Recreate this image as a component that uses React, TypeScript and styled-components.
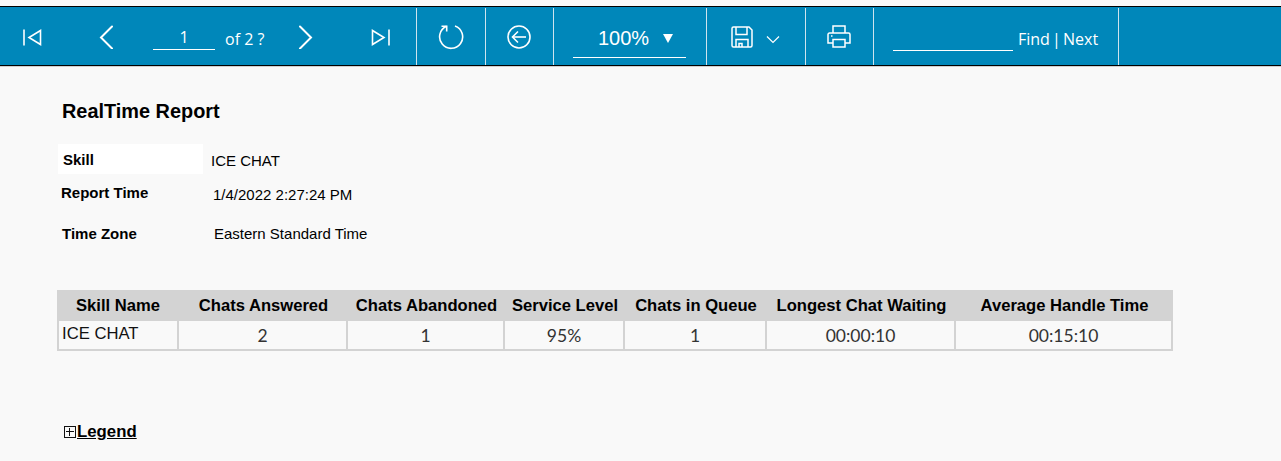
import styled, { createGlobalStyle } from 'styled-components';

const columns = [
  { title: 'Skill Name', width: 122, value: 'ICE CHAT' },
  { title: 'Chats Answered', width: 169, value: '2' },
  { title: 'Chats Abandoned', width: 157, value: '1' },
  { title: 'Service Level', width: 120, value: '95%' },
  { title: 'Chats in Queue', width: 142, value: '1' },
  { title: 'Longest Chat Waiting', width: 189, value: '00:00:10' },
  { title: 'Average Handle Time', width: 217, value: '00:15:10' },
];

function App() {
  return (
    <Page>
      <GlobalStyle />
      <Toolbar>
        <Section $width={417}>
          <IconSlot $left={22} $width={21} $drop={2}>
            <svg width="21" height="20" viewBox="0 0 21 20" fill="none" stroke="#fff" strokeWidth="1.6">
              <path d="M2 1.5v16" />
              <path d="M18.5 2.5v14L7 9.5z" />
            </svg>
          </IconSlot>
          <IconSlot $left={55} $width={18}>
            <svg width="18" height="24" viewBox="0 0 18 24" fill="none" stroke="#fff" strokeWidth="2" strokeLinecap="round">
              <path d="M14 1.5 3 12.5l11 11" />
            </svg>
          </IconSlot>
          <PageInput>1</PageInput>
          <PageCount>of 2 ?</PageCount>
          <IconSlot $left={31} $width={18}>
            <svg width="18" height="24" viewBox="0 0 18 24" fill="none" stroke="#fff" strokeWidth="2" strokeLinecap="round">
              <path d="M3 1.5l11 11-11 11" />
            </svg>
          </IconSlot>
          <IconSlot $left={55} $width={21} $drop={2}>
            <svg width="21" height="20" viewBox="0 0 21 20" fill="none" stroke="#fff" strokeWidth="1.6">
              <path d="M2.5 2.5v14L14 9.5z" />
              <path d="M19 1.500v16" />
            </svg>
          </IconSlot>
        </Section>
        <Section $width={69} $center>
          <svg width="26" height="26" viewBox="0 0 26 26" fill="none" stroke="#fff" strokeWidth="1.6">
            <path d="M8.5 2.3A11.5 11.5 0 1 0 17 2" />
            <path d="M3.5 2.2 8.7 2.2 8.7 7.4" />
          </svg>
        </Section>
        <Section $width={68}>
          <IconSlot $left={20} $width={26}>
            <svg width="26" height="26" viewBox="0 0 26 26" fill="none" stroke="#fff" strokeWidth="1.6">
              <circle cx="13" cy="13" r="11" />
              <path d="M20 13H7" />
              <path d="M12 7.5 6.5 13l5.5 5.5" />
            </svg>
          </IconSlot>
        </Section>
        <Section $width={153}>
          <ZoomSelect>
            100%
            <ZoomCaret />
          </ZoomSelect>
        </Section>
        <Section $width={99}>
          <IconSlot $left={24} $width={22}>
            <svg width="22" height="22" viewBox="0 0 22 22" fill="none" stroke="#fff" strokeWidth="1.5">
              <path d="M1 2.5A1.5 1.5 0 0 1 2.5 1H18l3 3v15.5a1.5 1.5 0 0 1-1.500 1.500h-17A1.500 1.500 0 0 1 1 19.500z" />
              <path d="M5 1v7.500h11V1" />
              <path d="M5 21v-7.500h12V21" />
              <path d="M8 21v-3.500h3V21" />
            </svg>
          </IconSlot>
          <IconSlot $left={13} $width={14} $drop={6}>
            <svg width="14" height="9" viewBox="0 0 14 9" fill="none" stroke="#fff" strokeWidth="1.200">
              <path d="M1 1.500l6 6 6-6" />
            </svg>
          </IconSlot>
        </Section>
        <Section $width={68}>
          <IconSlot $left={21} $width={24}>
            <svg width="24" height="24" viewBox="0 0 24 24" fill="none" stroke="#fff" strokeWidth="1.500">
              <path d="M6 8V1h12v7" />
              <path d="M6 18H1V9.500A1.500 1.500 0 0 1 2.500 8h19A1.500 1.500 0 0 1 23 9.500V18h-5" />
              <path d="M6 14.500h12V22H6z" />
              <path d="M4 11h1.500" />
            </svg>
          </IconSlot>
        </Section>
        <Section $width={245}>
          <FindInput />
          <FindLinks>Find | Next</FindLinks>
        </Section>
      </Toolbar>

      <Content>
        <Title>RealTime Report</Title>
        <SkillRow>
          <SkillLabel>Skill</SkillLabel>
          <InfoValue>ICE CHAT</InfoValue>
        </SkillRow>
        <InfoRow $top={3} $left={3}>
          <InfoLabel>Report Time</InfoLabel>
          <InfoValue $drop={4}>1/4/2022 2:27:24 PM</InfoValue>
        </InfoRow>
        <InfoRow $top={11} $left={4}>
          <InfoLabel>Time Zone</InfoLabel>
          <InfoValue $drop={0}>Eastern Standard Time</InfoValue>
        </InfoRow>

        <ReportTable>
          <colgroup>
            {columns.map((col) => (
              <col key={col.title} style={{ width: col.width }} />
            ))}
          </colgroup>
          <thead>
            <tr>
              {columns.map((col) => (
                <HeadCell key={col.title}>{col.title}</HeadCell>
              ))}
            </tr>
          </thead>
          <tbody>
            <tr>
              {columns.map((col, i) =>
                i === 0 ? (
                  <NameCell key={col.title}>{col.value}</NameCell>
                ) : (
                  <ValueCell key={col.title}>{col.value}</ValueCell>
                ),
              )}
            </tr>
          </tbody>
        </ReportTable>

        <Legend>
          <LegendBox />
          <LegendLink>Legend</LegendLink>
        </Legend>
      </Content>
    </Page>
  );
}

const GlobalStyle = createGlobalStyle`
  html, body {
    margin: 0;
    padding: 0;
    background: #f9f9f9;
  }
`;

const Page = styled.div`
  width: 1281px;
  height: 461px;
  overflow: hidden;
  padding-top: 6px;
  box-sizing: border-box;
  background: #f9f9f9;
  font-family: 'Liberation Sans', Arial, sans-serif;
  color: #000;
`;

const Toolbar = styled.div`
  display: flex;
  height: 58px;
  background: #0087ba;
  border-top: 1px solid #000;
  border-bottom: 1px solid #000;
  box-shadow: 0 1px 0 #cfcfcf;
`;

const Section = styled.div<{ $width: number; $center?: boolean }>`
  width: ${({ $width }) => $width}px;
  flex: none;
  box-sizing: border-box;
  display: flex;
  align-items: center;
  justify-content: ${({ $center }) => ($center ? 'center' : 'flex-start')};
  border-right: 1px solid #cfe4ee;
  margin-top: 1px;
  color: #fff;
`;

const IconSlot = styled.span<{ $left: number; $width: number; $drop?: number }>`
  display: flex;
  flex: none;
  width: ${({ $width }) => $width}px;
  margin-left: ${({ $left }) => $left}px;
  margin-top: ${({ $drop }) => $drop ?? 0}px;
`;

const PageInput = styled.div`
  width: 62px;
  margin-left: 37px;
  margin-top: 3px;
  box-sizing: border-box;
  height: 23px;
  border-bottom: 1px solid #fff;
  text-align: center;
  font: 16px/20px 'Open Sans', sans-serif;
`;

const PageCount = styled.span`
  margin-left: 10px;
  width: 41px;
  margin-top: 5px;
  white-space: nowrap;
  font: 16px/20px 'Open Sans', sans-serif;
`;

const ZoomSelect = styled.div`
  width: 113px;
  height: 37px;
  margin-left: 19px;
  margin-top: 6px;
  box-sizing: border-box;
  border-bottom: 1px solid #fff;
  display: flex;
  align-items: center;
  padding: 0 0 2px 25px;
  font-size: 20px;
`;

const ZoomCaret = styled.span`
  width: 0;
  height: 0;
  margin-left: 14px;
  border-left: 5px solid transparent;
  border-right: 5px solid transparent;
  border-top: 9px solid #fff;
`;

const FindInput = styled.div`
  width: 120px;
  height: 22px;
  margin-left: 19px;
  margin-top: 5px;
  border-bottom: 1px solid #fff;
`;

const FindLinks = styled.span`
  margin-left: 5px;
  margin-top: 5px;
  white-space: nowrap;
  word-spacing: -2px;
  font: 16px/20px 'Open Sans', sans-serif;
`;

const Content = styled.div`
  padding: 33px 0 0 58px;
`;

const Title = styled.h1`
  margin: 0 0 0 4px;
  font-size: 19.9px;
  line-height: 24px;
  font-weight: 700;
`;

const SkillRow = styled.div`
  display: flex;
  align-items: center;
  margin-top: 21px;
`;

const SkillLabel = styled.div`
  width: 145px;
  height: 30px;
  flex: none;
  box-sizing: border-box;
  padding: 8px 0 0 5px;
  background: #fff;
  font-size: 15px;
  font-weight: 700;
  line-height: 16px;
  margin-right: 8px;
`;

const InfoRow = styled.div<{ $top: number; $left: number }>`
  display: flex;
  align-items: center;
  height: 30px;
  margin-top: ${({ $top }) => $top}px;
  margin-left: ${({ $left }) => $left}px;
`;

const InfoLabel = styled.div`
  width: 152px;
  flex: none;
  font-size: 15px;
  font-weight: 700;
`;

const InfoValue = styled.div<{ $drop?: number }>`
  font-size: 15px;
  padding-top: ${({ $drop }) => $drop ?? 2}px;
`;

const ReportTable = styled.table`
  margin-top: 42px;
  margin-left: -1px;
  width: 1116px;
  table-layout: fixed;
  border-collapse: separate;
  border-spacing: 0;
`;

const HeadCell = styled.th`
  height: 31px;
  padding: 0;
  background: #d3d3d3;
  font-size: 16.6px;
  font-weight: 700;
  text-align: center;
  white-space: nowrap;
`;

const ValueCell = styled.td`
  height: 30px;
  padding: 0;
  box-sizing: border-box;
  text-align: center;
  font: 17.5px 'Lato', sans-serif;
  color: #333;
  border-bottom: 2px solid #d3d3d3;
  border-right: 2px solid #d3d3d3;
`;

const NameCell = styled.td`
  height: 30px;
  padding: 0 0 2px 3px;
  box-sizing: border-box;
  font-size: 16.67px;
  color: #111;
  border-left: 2px solid #d3d3d3;
  border-bottom: 2px solid #d3d3d3;
  border-right: 2px solid #d3d3d3;
`;

const Legend = styled.div`
  display: flex;
  align-items: center;
  margin: 71px 0 0 6px;
`;

const LegendBox = styled.span`
  position: relative;
  width: 12px;
  height: 12px;
  box-sizing: border-box;
  border: 1px solid #111;
  margin-right: 1px;

  &::before {
    content: '';
    position: absolute;
    left: 1px;
    right: 1px;
    top: 4px;
    height: 1px;
    background: #111;
  }

  &::after {
    content: '';
    position: absolute;
    top: 1px;
    bottom: 1px;
    left: 4px;
    width: 1px;
    background: #111;
  }
`;

const LegendLink = styled.span`
  font-size: 16.8px;
  font-weight: 700;
  text-decoration: underline;
`;

export default App;
